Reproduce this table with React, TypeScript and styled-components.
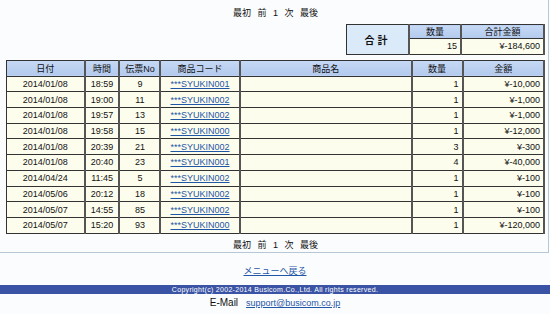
import React from "react";
import styled, { createGlobalStyle } from "styled-components";

const GlobalStyle = createGlobalStyle`
  body {
    margin: 0;
    background: #fbfcfd;
    font-family: "Liberation Sans", "Noto Sans CJK JP", sans-serif;
    font-size: 9px;
    color: #111;
  }
`;

const Main = styled.div`
  width: 549px;
  box-sizing: border-box;
  padding: 7px 3px 0 6px;
  border-right: 1px solid #b7c7d6;
  border-bottom: 1px solid #b7c7d6;
  height: 253px;
`;

const Pager = styled.div<{ $top?: number }>`
  text-align: center;
  line-height: 12px;
  margin-top: ${(p) => p.$top ?? 0}px;
  word-spacing: 4px;
`;

const SummaryRow = styled.div`
  display: flex;
  justify-content: flex-end;
  margin-top: 5px;
`;

const Table = styled.table<{ $top?: number }>`
  border-collapse: collapse;
  border: 1px solid #333;
  table-layout: fixed;
  margin-top: ${(p) => p.$top ?? 0}px;
`;

const Head = styled.th<{ $w: number; $h?: number }>`
  width: ${(p) => p.$w}px;
  height: ${(p) => p.$h ?? 15}px;
  padding: 0;
  font-weight: normal;
  border: 1px solid #333;
  border-right: 2px solid #555;
  background: linear-gradient(#c6d9f5, #b3caed);
  text-align: center;
`;

const TotalLabel = styled.th`
  width: 61px;
  padding: 0;
  border: 1px solid #333;
  border-right: 2px solid #555;
  background: #dbeaf9;
  font-family: "Noto Sans CJK JP", sans-serif;
  font-weight: bold;
  font-size: 10px;
  letter-spacing: 3px;
`;

const Cell = styled.td<{ $align?: "left" | "center" | "right" }>`
  height: 14.7px;
  padding: 0 3px;
  border: 1px solid #333;
  border-right: 2px solid #555;
  background: #fdfdee;
  text-align: ${(p) => p.$align ?? "center"};
  white-space: nowrap;
  overflow: hidden;
  line-height: 10px;
`;

const Link = styled.a`
  color: #1f56a6;
  text-decoration: underline;
`;

const BackLink = styled.div`
  text-align: center;
  margin-top: 12px;
  line-height: 12px;
`;

const Bar = styled.div`
  margin-top: 8px;
  height: 9px;
  background: #3a53a4;
  color: #fff;
  font-size: 7px;
  line-height: 9px;
  text-align: center;
  letter-spacing: 0.3px;
`;

const MailLine = styled.div`
  text-align: center;
  line-height: 14px;
  margin-top: 2px;
  font-size: 10px;

  a {
    margin-left: 8px;
    font-size: 9px;
  }
`;

type Row = {
  date: string;
  time: string;
  slip: string;
  code: string;
  qty: number;
  amount: string;
};

const rows: Row[] = [
  { date: "2014/01/08", time: "18:59", slip: "9", code: "***SYUKIN001", qty: 1, amount: "¥-10,000" },
  { date: "2014/01/08", time: "19:00", slip: "11", code: "***SYUKIN002", qty: 1, amount: "¥-1,000" },
  { date: "2014/01/08", time: "19:57", slip: "13", code: "***SYUKIN002", qty: 1, amount: "¥-1,000" },
  { date: "2014/01/08", time: "19:58", slip: "15", code: "***SYUKIN000", qty: 1, amount: "¥-12,000" },
  { date: "2014/01/08", time: "20:39", slip: "21", code: "***SYUKIN002", qty: 3, amount: "¥-300" },
  { date: "2014/01/08", time: "20:40", slip: "23", code: "***SYUKIN001", qty: 4, amount: "¥-40,000" },
  { date: "2014/04/24", time: "11:45", slip: "5", code: "***SYUKIN002", qty: 1, amount: "¥-100" },
  { date: "2014/05/06", time: "20:12", slip: "18", code: "***SYUKIN002", qty: 1, amount: "¥-100" },
  { date: "2014/05/07", time: "14:55", slip: "85", code: "***SYUKIN002", qty: 1, amount: "¥-100" },
  { date: "2014/05/07", time: "15:20", slip: "93", code: "***SYUKIN000", qty: 1, amount: "¥-120,000" },
];

const App: React.FC = () => {
  return (
    <>
      <GlobalStyle />
      <Main>
        <Pager>最初 前 1 次 最後</Pager>
        <SummaryRow>
          <Table>
            <tbody>
              <tr>
                <TotalLabel rowSpan={2}>合計</TotalLabel>
                <Head $w={50} $h={13}>数量</Head>
                <Head $w={81} $h={13}>合計金額</Head>
              </tr>
              <tr>
                <Cell $align="right">15</Cell>
                <Cell $align="right">¥-184,600</Cell>
              </tr>
            </tbody>
          </Table>
        </SummaryRow>
        <Table $top={5}>
          <thead>
            <tr>
              <Head $w={78}>日付</Head>
              <Head $w={33}>時間</Head>
              <Head $w={40}>伝票No</Head>
              <Head $w={78}>商品コード</Head>
              <Head $w={178}>商品名</Head>
              <Head $w={51}>数量</Head>
              <Head $w={81}>金額</Head>
            </tr>
          </thead>
          <tbody>
            {rows.map((r, i) => (
              <tr key={i}>
                <Cell>{r.date}</Cell>
                <Cell>{r.time}</Cell>
                <Cell>{r.slip}</Cell>
                <Cell>
                  <Link href="#">{r.code}</Link>
                </Cell>
                <Cell />
                <Cell $align="right">{r.qty}</Cell>
                <Cell $align="right">{r.amount}</Cell>
              </tr>
            ))}
          </tbody>
        </Table>
        <Pager $top={5}>最初 前 1 次 最後</Pager>
      </Main>
      <BackLink>
        <Link href="#">メニューへ戻る</Link>
      </BackLink>
      <Bar>Copyright(c) 2002-2014 Busicom.Co.,Ltd. All rights reserved.</Bar>
      <MailLine>
        E-Mail<Link href="#">support@busicom.co.jp</Link>
      </MailLine>
    </>
  );
};

export default App;
